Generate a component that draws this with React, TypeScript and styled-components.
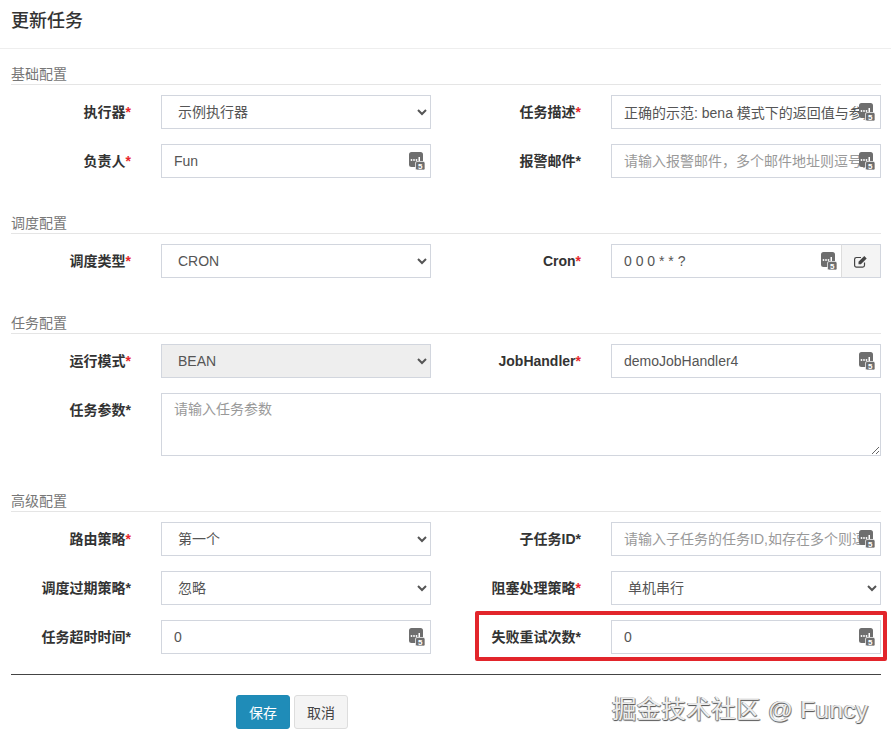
import React from "react";
import styled, { createGlobalStyle } from "styled-components";

const GlobalStyle = createGlobalStyle`
  html, body {
    margin: 0;
    padding: 0;
    background: #fff;
  }
  body {
    font-family: "Liberation Sans", "Noto Sans CJK SC", sans-serif;
    font-size: 14px;
    color: #333;
  }
`;

const Page = styled.div`
  position: relative;
  width: 891px;
  height: 747px;
  overflow: hidden;
  background: #fff;
`;

const Header = styled.header`
  height: 49px;
  padding: 0 11px;
  box-sizing: border-box;
  display: flex;
  align-items: center;
  border-bottom: 1px solid #eeeeee;
`;

const Title = styled.h4`
  margin: -7px 0 0;
  font-size: 18px;
  font-weight: 500;
  line-height: 26px;
  color: #333;
`;

const Form = styled.form`
  padding: 0 10px 0 11px;
`;

const Section = styled.section<{ $height: number }>`
  height: ${(p) => p.$height}px;
`;

const Legend = styled.div`
  height: 36px;
  box-sizing: border-box;
  padding-top: 15px;
  line-height: 20px;
  font-size: 14px;
  color: #777;
  border-bottom: 1px solid #e5e5e5;
  margin-bottom: 10px;
`;

const Rows = styled.div`
  display: flex;
  flex-direction: column;
  gap: 15px;
`;

const Row = styled.div`
  display: grid;
  grid-template-columns: 420px 420px;
  column-gap: 30px;
`;

const Field = styled.div`
  display: grid;
  grid-template-columns: 120px 270px;
  column-gap: 30px;
  align-items: start;
`;

const WideField = styled.div`
  display: grid;
  grid-template-columns: 120px 720px;
  column-gap: 30px;
  align-items: start;
`;

const Label = styled.label`
  text-align: right;
  font-weight: 700;
  font-size: 14px;
  line-height: 20px;
  padding-top: 7px;
  color: #333;
  white-space: nowrap;
`;

const Star = styled.span<{ $red?: boolean }>`
  color: ${(p) => (p.$red ? "#e8262d" : "#333")};
`;

const InputWrap = styled.div`
  position: relative;
  display: flex;
  height: 34px;
`;

const TextInput = styled.input`
  flex: 1;
  min-width: 0;
  height: 34px;
  box-sizing: border-box;
  padding: 0 12px;
  border: 1px solid #d2d6de;
  background: #fff;
  font: inherit;
  font-size: 14px;
  color: #555;
  outline: none;
  &::placeholder {
    color: #999;
    opacity: 1;
  }
`;

const Select = styled.select`
  width: 270px;
  height: 34px;
  box-sizing: border-box;
  padding: 0 12px;
  border: 1px solid #d2d6de;
  border-radius: 0;
  background: ${(p) => (p.disabled ? "#eeeeee" : "#fff")};
  font: inherit;
  font-size: 14px;
  color: #555;
  opacity: 1;
  outline: none;
`;

const TextArea = styled.textarea`
  display: block;
  width: 720px;
  height: 63px;
  box-sizing: border-box;
  padding: 5px 12px;
  border: 1px solid #d2d6de;
  background: #fff;
  font: inherit;
  font-size: 14px;
  line-height: 20px;
  color: #555;
  outline: none;
  &::placeholder {
    color: #999;
    opacity: 1;
  }
`;

const AddonButton = styled.span`
  width: 40px;
  height: 34px;
  box-sizing: border-box;
  display: flex;
  align-items: center;
  justify-content: center;
  border: 1px solid #d2d6de;
  border-left: 1px solid #dddddd;
  margin-left: -1px;
  background: #f4f4f4;
  color: #444;
`;

const KeyIcon = styled.svg<{ $right?: number }>`
  position: absolute;
  top: 8px;
  right: ${(p) => p.$right ?? 6}px;
  width: 16px;
  height: 18px;
`;

const Footer = styled.div`
  margin-top: 0;
  border-top: 1px solid #444;
  padding: 20px 0 0 225px;
  display: flex;
  gap: 4px;
`;

const Button = styled.button<{ $primary?: boolean }>`
  height: 34px;
  box-sizing: border-box;
  padding: 0 12px;
  border-radius: 3px;
  border: 1px solid ${(p) => (p.$primary ? "#1f8ab5" : "#ddd")};
  background: ${(p) => (p.$primary ? "#1f8cb8" : "#f4f4f4")};
  color: ${(p) => (p.$primary ? "#fff" : "#444")};
  font: inherit;
  font-size: 14px;
`;

const Highlight = styled.div`
  position: absolute;
  left: 475px;
  top: 611px;
  width: 412px;
  height: 50px;
  box-sizing: border-box;
  border: 4px solid #e2252b;
  border-radius: 2px;
  pointer-events: none;
`;

const Watermark = styled.div`
  position: absolute;
  left: 612px;
  top: 692px;
  font-size: 24.500px;
  line-height: 36px;
  letter-spacing: 0.3px;
  color: #eeeeee;
  text-shadow: -1px 0 0 #8a8a8a, 0 1px 1px #555, 1px 1px 0 #999;
  white-space: nowrap;
  pointer-events: none;
`;

function FieldIcon({ right }: { right?: number }) {
  return (
    <KeyIcon $right={right} viewBox="0 0 16 18" aria-hidden="true">
      <rect x="0" y="0" width="14" height="15" rx="2.500" fill="#6e6e6e" />
      <circle cx="2.500" cy="8" r="0.9" fill="#fff" />
      <circle cx="5" cy="8" r="0.9" fill="#fff" />
      <circle cx="7.500" cy="8" r="0.9" fill="#fff" />
      <rect x="9.500" y="5" width="1.500" height="4" fill="#fff" />
      <rect x="6.500" y="9.500" width="9.500" height="8.500" rx="1.500" fill="#6e6e6e" stroke="#fff" strokeWidth="0.7" />
      <text x="11.300" y="16.800" fontSize="8" fontWeight="700" textAnchor="middle" fill="#fff" fontFamily="Liberation Sans, sans-serif">
        5
      </text>
    </KeyIcon>
  );
}

function TextField({ label, red, value, placeholder }: { label: string; red?: boolean; value?: string; placeholder?: string }) {
  return (
    <Field>
      <Label>
        {label}
        <Star $red={red}>*</Star>
      </Label>
      <InputWrap>
        <TextInput readOnly value={value} placeholder={placeholder} />
        <FieldIcon />
      </InputWrap>
    </Field>
  );
}

function SelectField({ label, red, value, disabled }: { label: string; red?: boolean; value: string; disabled?: boolean }) {
  return (
    <Field>
      <Label>
        {label}
        <Star $red={red}>*</Star>
      </Label>
      <Select disabled={disabled} defaultValue={value}>
        <option>{value}</option>
      </Select>
    </Field>
  );
}

export default function App() {
  return (
    <Page>
      <GlobalStyle />
      <Header>
        <Title>更新任务</Title>
      </Header>
      <Form onSubmit={(e) => e.preventDefault()}>
        <Section $height={149}>
          <Legend>基础配置</Legend>
          <Rows>
            <Row>
              <SelectField label="执行器" red value="示例执行器" />
              <TextField label="任务描述" red value="正确的示范: bena 模式下的返回值与参数" />
            </Row>
            <Row>
              <TextField label="负责人" red value="Fun" />
              <TextField label="报警邮件" placeholder="请输入报警邮件，多个邮件地址则逗号分隔" />
            </Row>
          </Rows>
        </Section>
        <Section $height={100}>
          <Legend>调度配置</Legend>
          <Row>
            <SelectField label="调度类型" red value="CRON" />
            <Field>
              <Label>
                Cron<Star $red>*</Star>
              </Label>
              <InputWrap>
                <TextInput readOnly value="0 0 0 * * ?" />
                <FieldIcon right={44} />
                <AddonButton>
                  <svg width="14" height="13" viewBox="0 0 14 13" fill="none" stroke="currentColor" strokeWidth="1.2" aria-hidden="true">
                    <path d="M10.500 7.500v2.800a1.800 1.800 0 0 1-1.800 1.800H2.400A1.800 1.800 0 0 1 .6 10.300V4.300A1.800 1.800 0 0 1 2.400 2.500h4.600" />
                    <path d="M4.500 6.800 10.300 1l2.400 2.400-5.800 5.800H4.500z" fill="currentColor" stroke="none" />
                  </svg>
                </AddonButton>
              </InputWrap>
            </Field>
          </Row>
        </Section>
        <Section $height={178}>
          <Legend>任务配置</Legend>
          <Rows>
            <Row>
              <SelectField label="运行模式" red value="BEAN" disabled />
              <TextField label="JobHandler" red value="demoJobHandler4" />
            </Row>
            <WideField>
              <Label>
                任务参数<Star>*</Star>
              </Label>
              <TextArea readOnly placeholder="请输入任务参数" />
            </WideField>
          </Rows>
        </Section>
        <Section $height={198}>
          <Legend>高级配置</Legend>
          <Rows>
            <Row>
              <SelectField label="路由策略" red value="第一个" />
              <TextField label="子任务ID" placeholder="请输入子任务的任务ID,如存在多个则逗号分隔" />
            </Row>
            <Row>
              <SelectField label="调度过期策略" value="忽略" />
              <SelectField label="阻塞处理策略" red value="单机串行" />
            </Row>
            <Row>
              <TextField label="任务超时时间" value="0" />
              <TextField label="失败重试次数" value="0" />
            </Row>
          </Rows>
        </Section>
        <Footer>
          <Button $primary type="button">保存</Button>
          <Button type="button">取消</Button>
        </Footer>
      </Form>
      <Highlight />
      <Watermark>掘金技术社区 @ Funcy</Watermark>
    </Page>
  );
}
